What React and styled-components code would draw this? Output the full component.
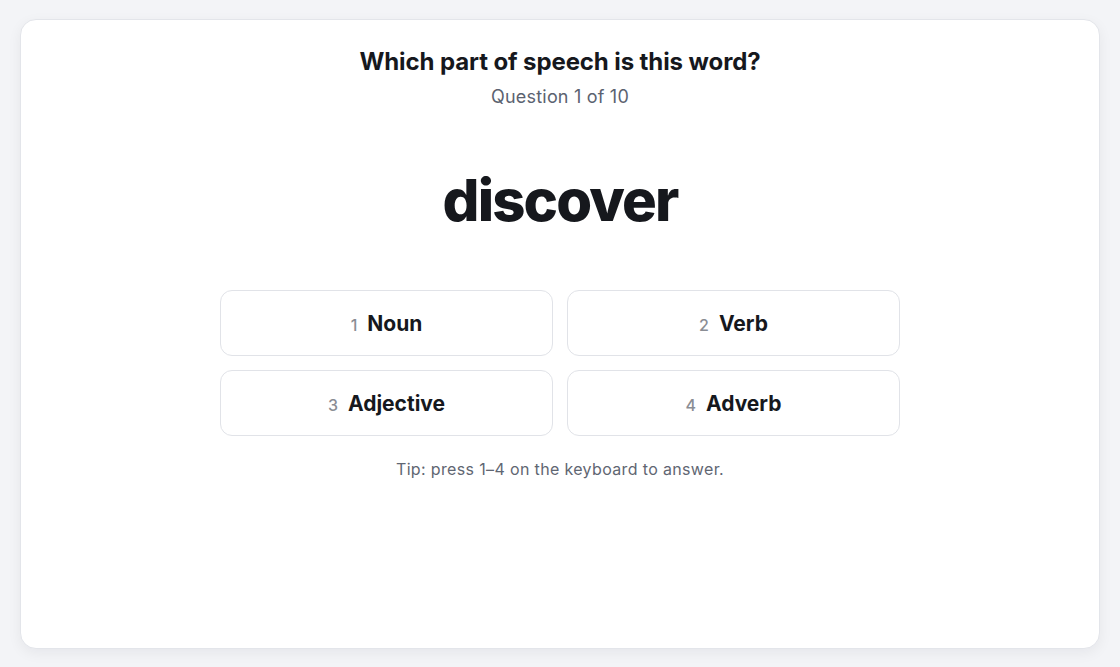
import styled, { createGlobalStyle } from "styled-components";

const GlobalStyle = createGlobalStyle`
  html, body {
    margin: 0;
    padding: 0;
    background: #f3f4f7;
    font-family: Inter, "Noto Sans", sans-serif;
  }
  * { box-sizing: border-box; }
`;

const Page = styled.div`
  padding: 19px 20px;
`;

const Card = styled.div`
  background: #fff;
  border: 1px solid #e3e5ea;
  border-radius: 16px;
  box-shadow: 0 4px 14px rgba(17, 24, 39, 0.06);
  height: 630px;
  padding: 26px 24px;
  display: flex;
  flex-direction: column;
  align-items: center;
`;

const Title = styled.h1`
  margin: 0;
  font-size: 24px;
  line-height: 32px;
  font-weight: 700;
  color: #16181d;
  letter-spacing: -0.1px;
`;

const Subtitle = styled.p`
  margin: 7px 0 0;
  font-size: 18px;
  line-height: 24px;
  color: #5b6270;
  letter-spacing: 0.2px;
`;

const Word = styled.div`
  margin-top: 54px;
  font-size: 58px;
  line-height: 74px;
  font-weight: 800;
  color: #16181d;
  letter-spacing: -1.9px;
`;

const Options = styled.div`
  margin-top: 53px;
  width: 680px;
  display: grid;
  grid-template-columns: 1fr 1fr;
  gap: 14px;
`;

const Option = styled.button`
  height: 66px;
  background: #fff;
  border: 1px solid #e1e3e8;
  border-radius: 12px;
  display: flex;
  align-items: center;
  justify-content: center;
  gap: 10px;
  font-family: inherit;
  cursor: pointer;
`;

const Key = styled.span`
  font-size: 16px;
  font-weight: 500;
  color: #8a8d94;
  padding-top: 3px;
`;

const Label = styled.span`
  font-size: 21px;
  font-weight: 700;
  color: #16181d;
`;

const Tip = styled.p`
  margin: 21px 0 0;
  font-size: 16px;
  line-height: 24px;
  color: #5f6672;
  letter-spacing: 0.35px;
`;

const options = ["Noun", "Verb", "Adjective", "Adverb"];

export default function App() {
  return (
    <>
      <GlobalStyle />
      <Page>
        <Card>
          <Title>Which part of speech is this word?</Title>
          <Subtitle>Question 1 of 10</Subtitle>
          <Word>discover</Word>
          <Options>
            {options.map((label, i) => (
              <Option key={label}>
                <Key>{i + 1}</Key>
                <Label>{label}</Label>
              </Option>
            ))}
          </Options>
          <Tip>Tip: press 1–4 on the keyboard to answer.</Tip>
        </Card>
      </Page>
    </>
  );
}
